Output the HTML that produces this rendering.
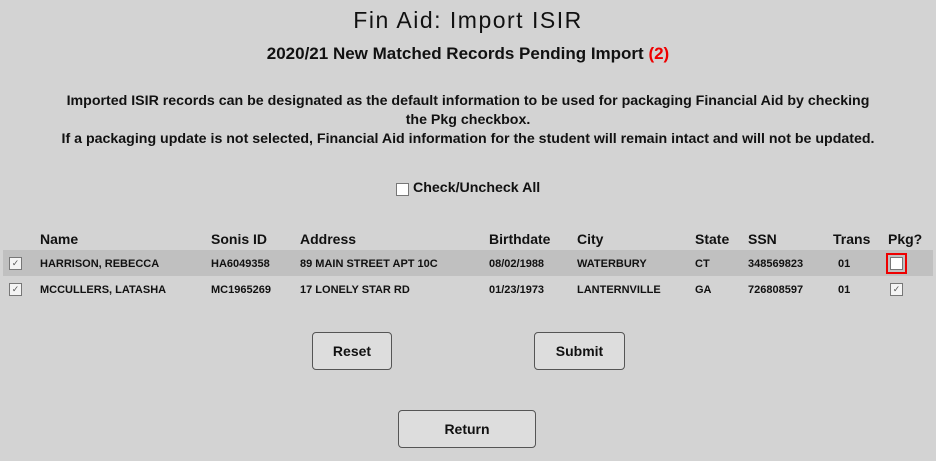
<!DOCTYPE html><html><head><style>
body{margin:0;width:936px;height:461px;background:#d3d3d3;font-family:"Liberation Sans",sans-serif;color:#111;position:relative;overflow:hidden}
.a{position:absolute;white-space:nowrap;font-weight:bold}
.h{font-size:14px;top:231px}
.r{font-size:11px}
.cb{position:absolute;width:11px;height:11px;border:1px solid #777;background:#f4f4f4;font-size:9px;line-height:11px;text-align:center;color:#555}
.btn{position:absolute;border:1px solid #555;border-radius:4px;background:#ddd;font-weight:bold;font-size:14px;text-align:center;box-sizing:border-box}
</style></head><body>
<div class="a" style="left:0;width:936px;text-align:center;top:7px;font-size:23px;letter-spacing:1.5px;font-weight:normal">Fin Aid: Import ISIR</div>
<div class="a" style="left:0;width:936px;text-align:center;top:44px;font-size:17px">2020/21 New Matched Records Pending Import <span style="color:#e00">(2)</span></div>
<div class="a" style="left:0;width:936px;text-align:center;top:92px;font-size:14.2px;line-height:19px;white-space:normal">Imported ISIR records can be designated as the default information to be used for packaging Financial Aid by checking<br>the Pkg checkbox.<br>If a packaging update is not selected, Financial Aid information for the student will remain intact and will not be updated.</div>
<div class="cb" style="left:396px;top:183px;background:#fff"></div>
<div class="a" style="left:413px;top:180px;font-size:14.2px">Check/Uncheck All</div>
<div class="a h" style="left:40px">Name</div><div class="a h" style="left:211px">Sonis ID</div><div class="a h" style="left:300px">Address</div><div class="a h" style="left:489px">Birthdate</div><div class="a h" style="left:577px">City</div><div class="a h" style="left:695px">State</div><div class="a h" style="left:748px">SSN</div><div class="a h" style="left:833px">Trans</div><div class="a h" style="left:888px">Pkg?</div>
<div style="position:absolute;left:3px;top:250px;width:930px;height:26px;background:#c0c0c0"></div>
<div class="cb" style="left:9px;top:257px">✓</div>
<div class="a r" style="left:40px;top:258px">HARRISON, REBECCA</div><div class="a r" style="left:211px;top:258px">HA6049358</div><div class="a r" style="left:300px;top:258px">89 MAIN STREET APT 10C</div><div class="a r" style="left:489px;top:258px">08/02/1988</div><div class="a r" style="left:577px;top:258px">WATERBURY</div><div class="a r" style="left:695px;top:258px">CT</div><div class="a r" style="left:748px;top:258px">348569823</div><div class="a r" style="left:838px;top:258px">01</div>
<div style="position:absolute;left:886px;top:253px;width:17px;height:17px;border:2px solid #e00;box-sizing:content-box"><div style="margin:2px;width:11px;height:11px;border:1px solid #777;background:#fff"></div></div>
<div class="cb" style="left:9px;top:283px">✓</div>
<div class="a r" style="left:40px;top:284px">MCCULLERS, LATASHA</div><div class="a r" style="left:211px;top:284px">MC1965269</div><div class="a r" style="left:300px;top:284px">17 LONELY STAR RD</div><div class="a r" style="left:489px;top:284px">01/23/1973</div><div class="a r" style="left:577px;top:284px">LANTERNVILLE</div><div class="a r" style="left:695px;top:284px">GA</div><div class="a r" style="left:748px;top:284px">726808597</div><div class="a r" style="left:838px;top:284px">01</div>
<div class="cb" style="left:890px;top:283px">✓</div>
<div class="btn" style="left:312px;top:332px;width:80px;height:38px;line-height:36px">Reset</div>
<div class="btn" style="left:534px;top:332px;width:91px;height:38px;line-height:36px">Submit</div>
<div class="btn" style="left:398px;top:410px;width:138px;height:38px;line-height:36px">Return</div>
</body></html>
